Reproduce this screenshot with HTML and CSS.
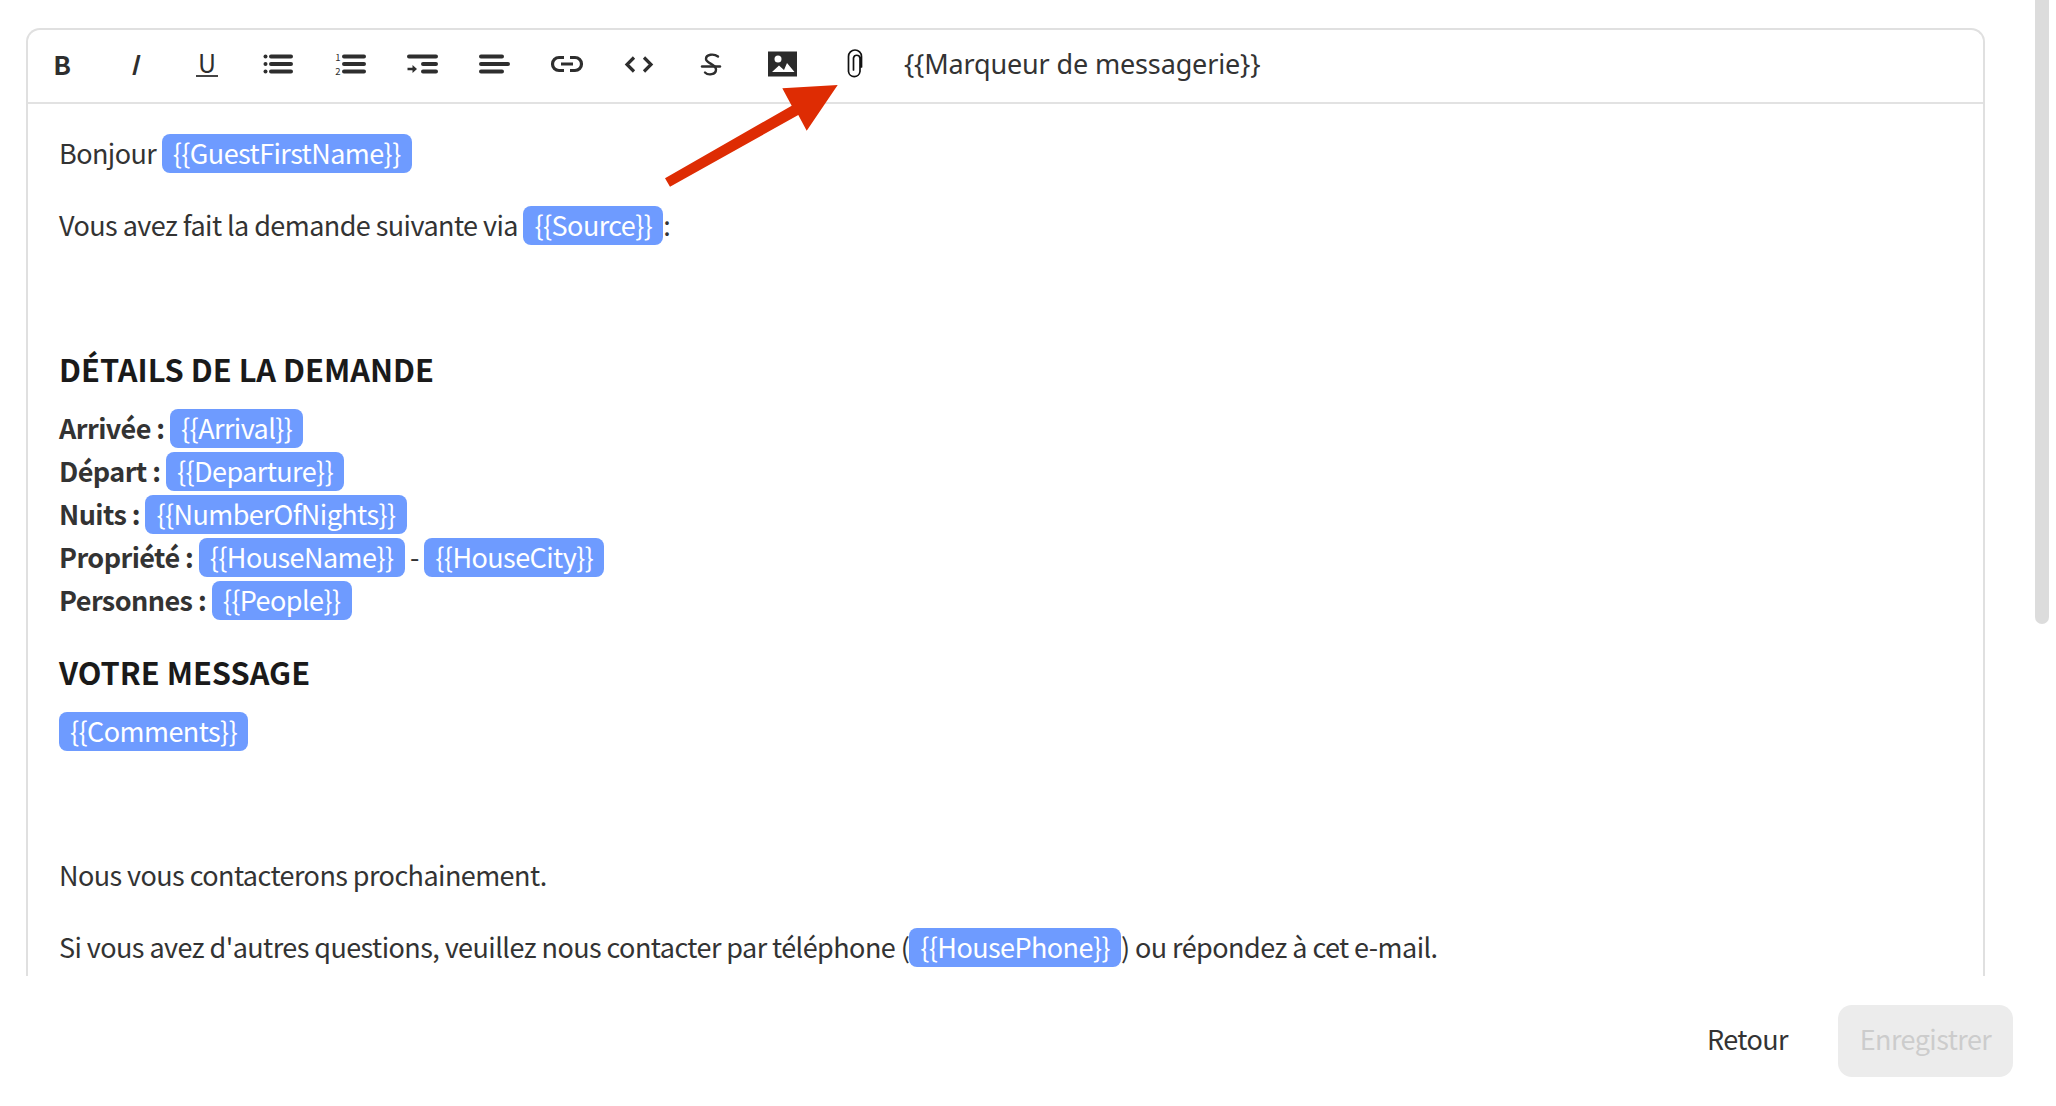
FILE: index.html
```html
<!DOCTYPE html>
<html lang="fr">
<head>
<meta charset="utf-8">
<title>Éditeur de message</title>
<link rel="stylesheet" href="styles.css">
</head>
<body>
<div class="page">
  <section class="editor">
    <div class="toolbar">
      <button class="tool tool-b">B</button>
      <button class="tool tool-i">I</button>
      <button class="tool tool-u"><span class="u-mark">U</span></button>
      <button class="tool"><svg class="ico" viewBox="0 0 72 32"><g class="bars"><path d="M28 8.5H48M28 16H48M28 23.5H48"/></g><g class="dots"><circle cx="22.500" cy="8.5" r="2"/><circle cx="22.500" cy="16" r="2"/><circle cx="22.500" cy="23.500" r="2"/></g></svg></button>
      <button class="tool"><svg class="ico" viewBox="0 0 72 32"><g class="bars"><path d="M29 8.5H49M29 16H49M29 23.5H49"/></g><text class="num" x="23" y="12.5">1</text><text class="num" x="23" y="27">2</text></svg></button>
      <button class="tool"><svg class="ico" viewBox="0 0 72 32"><g class="bars"><path d="M22 8.5H49M36 16H49M36 23.5H49"/></g><path class="arrow-mini" d="M20.5 21H28"/><path class="arrow-head" d="M25.5 17 30 21 25.5 25Z"/></svg></button>
      <button class="tool"><svg class="ico" viewBox="0 0 72 32"><g class="bars"><path d="M22 8.5H43M22 16H49M22 23.5H43"/></g></svg></button>
      <button class="tool"><svg class="ico" viewBox="0 0 72 32"><path class="line3" d="M33 9.5H28a6.5 6.5 0 0 0 0 13H33M39 9.5H44a6.5 6.5 0 0 1 0 13H39M30 16H42"/></svg></button>
      <button class="tool"><svg class="ico" viewBox="0 0 72 32"><path class="line3" d="M31 9.5 24 16.5 31 23.5M41 9.5 48 16.5 41 23.5"/></svg></button>
      <button class="tool"><svg class="ico" viewBox="0 0 72 32"><path class="line2" d="M27 18.500H45"/><path class="line2" d="M43 8.500C39 5.500 31 6 31 11 31 15.500 41 16 41 21.500 41 27 33 27.500 30 24.500"/></svg></button>
      <button class="tool"><svg class="ico ico-tall" viewBox="0 0 72 32"><rect class="pic" x="21" y="3.500" width="29" height="25"/><circle class="pic-w" cx="31" cy="11" r="3.500"/><path class="pic-w" d="M25 24 32 17.500 37 22 40 15 47.500 24Z"/></svg></button>
      <button class="tool"><svg class="ico ico-tall" viewBox="0 0 72 32"><path class="clip" d="M42.500 19V8.500a6.500 6.500 0 0 0-13 0V23.500a5.800 5.800 0 0 0 11.500 0V10a3.300 3.300 0 0 0-6.500 0V22"/></svg></button>
      <div class="marker">{{Marqueur de messagerie}}</div>
    </div>
    <div class="content">
      <p>Bonjour <span class="tag">{{GuestFirstName}}</span></p>
      <p>Vous avez fait la demande suivante via <span class="tag">{{Source}}</span>:</p>
      <p>&nbsp;</p>
      <h3>DÉTAILS DE LA DEMANDE</h3>
      <p>
        <strong>Arrivée :</strong> <span class="tag">{{Arrival}}</span><br>
        <strong>Départ :</strong> <span class="tag">{{Departure}}</span><br>
        <strong>Nuits :</strong> <span class="tag">{{NumberOfNights}}</span><br>
        <strong>Propriété :</strong> <span class="tag">{{HouseName}}</span> - <span class="tag">{{HouseCity}}</span><br>
        <strong>Personnes :</strong> <span class="tag">{{People}}</span>
      </p>
      <h3>VOTRE MESSAGE</h3>
      <p><span class="tag">{{Comments}}</span></p>
      <p>&nbsp;</p>
      <p>Nous vous contacterons prochainement.</p>
      <p>Si vous avez d'autres questions, veuillez nous contacter par téléphone (<span class="tag">{{HousePhone}}</span>) ou répondez à cet e-mail.</p>
    </div>
  </section>
  <footer class="footer">
    <button class="btn-back">Retour</button>
    <button class="btn-save" disabled>Enregistrer</button>
  </footer>
</div>
<svg class="callout" viewBox="0 0 2056 1106" aria-hidden="true"><polygon points="665,178.300 670,186.700 798.300,115 806.700,130.700 837.700,85 782.300,88.300 791.700,105.700"/></svg>
<div class="scrollthumb"></div>
</body>
</html>
```
FILE: styles.css
```css
* { box-sizing: border-box; }
html, body { margin: 0; height: 100%; background: #fff; overflow: hidden; }
body {
  font-family: "Noto Sans CJK SC", "Noto Sans", sans-serif;
  font-size: 27px;
  letter-spacing: -0.57px;
  color: #333;
}
.page { padding: 28px 43px 0 26px; display: flex; flex-direction: column; height: 1106px; }
.editor {
  width: 1959px;
  height: 948px;
  border: 2px solid #e0e0e0;
  border-bottom: 0;
  border-radius: 14px 14px 0 0;
  overflow: hidden;
  flex: none;
}
.toolbar {
  height: 74px;
  padding-bottom: 5px;
  border-bottom: 2px solid #e2e2e2;
  display: flex;
  align-items: center;
  margin-left: -1px;
}
.tool {
  width: 72px;
  height: 32px;
  padding: 0;
  border: 0;
  background: none;
  color: #2e2e2e;
  font: inherit;
  letter-spacing: 0;
  line-height: 32px;
  flex: none;
  display: flex;
  align-items: center;
  justify-content: center;
}
.tool-b { font-weight: 700; font-size: 26px; padding-right: 2px; }
.tool-i { font-style: italic; font-size: 27px; font-weight: 500; padding-right: 2px; }
.tool-u { font-size: 25px; }
.u-mark { border-bottom: 2px solid #444; line-height: 24px; padding: 0 2px; display: block; height: 27px; }
.ico { width: 72px; height: 32px; display: block; overflow: visible; }
.bars path { fill: none; stroke: #2e2e2e; stroke-width: 4; stroke-linecap: round; }
.dots circle { fill: #2e2e2e; }
.num { font-size: 9.500px; fill: #2e2e2e; text-anchor: middle; }
.arrow-mini { stroke: #2e2e2e; stroke-width: 2.500; fill: none; }
.arrow-head { fill: #2e2e2e; }
.line3 { fill: none; stroke: #2e2e2e; stroke-width: 3.200; }
.line2 { fill: none; stroke: #2e2e2e; stroke-width: 2.400; stroke-linecap: round; }
.pic { fill: #2b2b2b; }
.pic-w { fill: #fff; }
.clip { fill: none; stroke: #111; stroke-width: 1.700; stroke-linecap: round; }
.marker {
  margin-left: 13px;
  font-family: "Noto Sans", sans-serif;
  font-size: 27px;
  letter-spacing: -0.15px;
  color: #333;
}
.content { padding: 27px 31px 0 31px; }
p { margin: 0 0 29px; line-height: 43px; }
h3 { margin: 0 0 16px; font-size: 30.800px; letter-spacing: 0; line-height: 43px; font-weight: 700; color: #1a1a1a; }
strong { font-weight: 700; }
.tag {
  display: inline-block;
  height: 39px;
  line-height: 37px;
  padding: 0 11px;
  border-radius: 8px;
  background: #6e9bff;
  color: #fff;
  vertical-align: baseline;
}
.footer {
  flex: none;
  display: flex;
  justify-content: flex-end;
  align-items: center;
  padding-top: 29px;
}
.btn-back {
  border: 0; background: none; font: inherit; letter-spacing: inherit; color: #333; padding: 0 0 6px; margin-right: 50px;
}
.btn-save {
  width: 175px; height: 72px; border: 0; border-radius: 14px; background: #ececec;
  color: #ccc; font: inherit; letter-spacing: inherit; padding: 0 0 6px;
}
.callout { position: absolute; left: 0; top: 0; width: 2056px; height: 1106px; pointer-events: none; }
.callout polygon { fill: #de2c03; }
.scrollthumb {
  position: absolute; right: 7px; top: 0; width: 14px; height: 624px;
  background: #dcdcdc; border-radius: 0 0 7px 7px;
}
```
